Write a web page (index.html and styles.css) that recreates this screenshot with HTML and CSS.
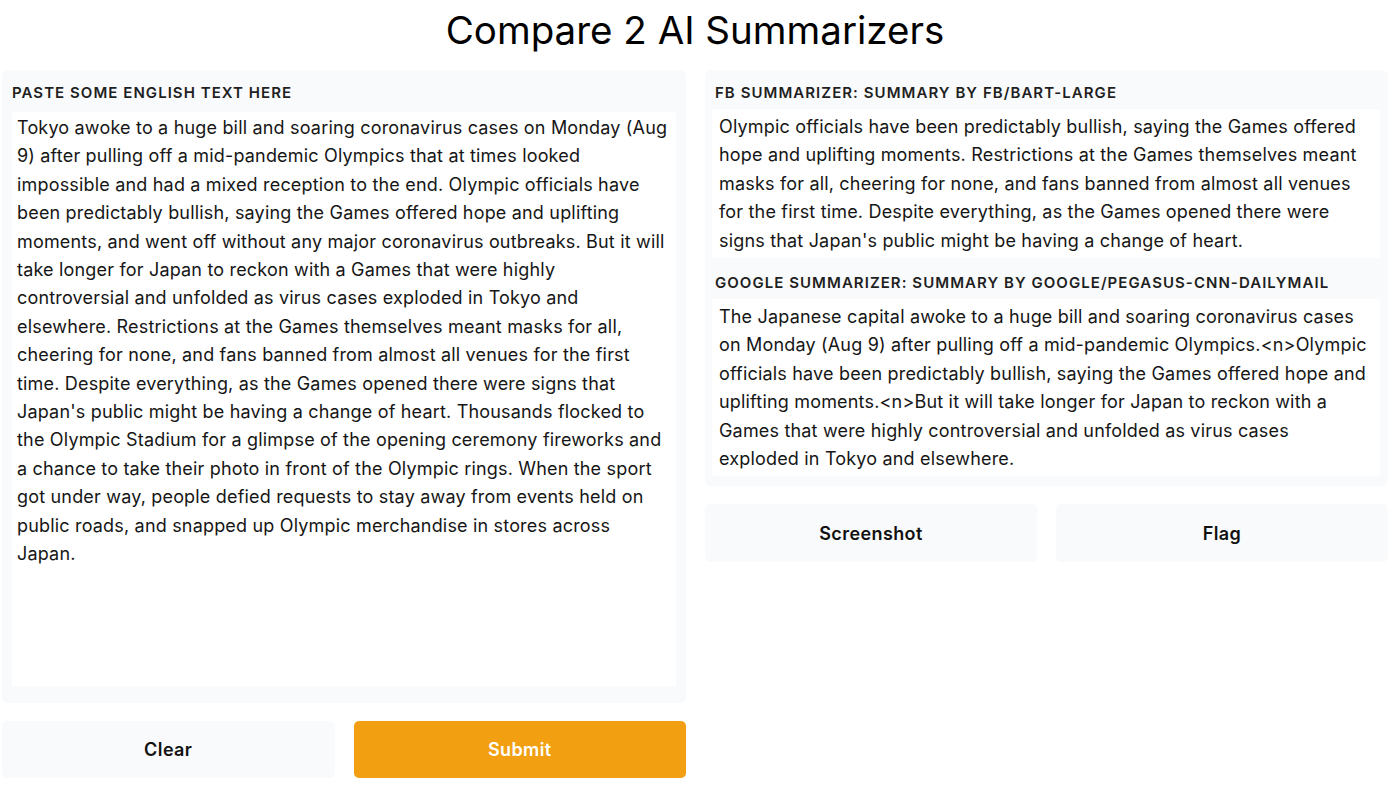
FILE: index.html
```html
<!DOCTYPE html>
<html lang="en">
<head>
<meta charset="utf-8">
<title>Compare 2 AI Summarizers</title>
<link rel="stylesheet" href="styles.css">
</head>
<body>
<h1 class="title">Compare 2 AI Summarizers</h1>
<div class="layout">
  <div class="col">
    <div class="panel panel-input">
      <label class="label" for="src">Paste some English text here</label>
      <textarea id="src" class="textbox">Tokyo awoke to a huge bill and soaring coronavirus cases on Monday (Aug 9) after pulling off a mid-pandemic Olympics that at times looked impossible and had a mixed reception to the end. Olympic officials have been predictably bullish, saying the Games offered hope and uplifting moments, and went off without any major coronavirus outbreaks. But it will take longer for Japan to reckon with a Games that were highly controversial and unfolded as virus cases exploded in Tokyo and elsewhere. Restrictions at the Games themselves meant masks for all, cheering for none, and fans banned from almost all venues for the first time. Despite everything, as the Games opened there were signs that Japan's public might be having a change of heart. Thousands flocked to the Olympic Stadium for a glimpse of the opening ceremony fireworks and a chance to take their photo in front of the Olympic rings. When the sport got under way, people defied requests to stay away from events held on public roads, and snapped up Olympic merchandise in stores across Japan.</textarea>
    </div>
    <div class="btn-row">
      <button class="btn">Clear</button>
      <button class="btn btn-primary">Submit</button>
    </div>
  </div>
  <div class="col">
    <div class="panel panel-output">
      <div class="label">FB Summarizer: Summary by fb/bart-large</div>
      <div class="outbox">Olympic officials have been predictably bullish, saying the Games offered hope and uplifting moments. Restrictions at the Games themselves meant masks for all, cheering for none, and fans banned from almost all venues for the first time. Despite everything, as the Games opened there were signs that Japan's public might be having a change of heart.</div>
      <div class="label label-second">Google Summarizer: Summary by google/pegasus-cnn-dailymail</div>
      <div class="outbox">The Japanese capital awoke to a huge bill and soaring coronavirus cases on Monday (Aug 9) after pulling off a mid-pandemic Olympics.&lt;n&gt;Olympic officials have been predictably bullish, saying the Games offered hope and uplifting moments.&lt;n&gt;But it will take longer for Japan to reckon with a Games that were highly controversial and unfolded as virus cases exploded in Tokyo and elsewhere.</div>
    </div>
    <div class="btn-row btn-row-right">
      <button class="btn">Screenshot</button>
      <button class="btn">Flag</button>
    </div>
  </div>
</div>
</body>
</html>
```

FILE: styles.css
```css
* { box-sizing: border-box; }
html, body { margin: 0; padding: 0; background: #ffffff; }
body {
  font-family: Inter, "Liberation Sans", Arial, sans-serif;
  color: #111111;
  width: 1400px;
  height: 796px;
  overflow: hidden;
}
.title {
  margin: 0;
  height: 60px;
  padding: 7px 12px 0 2px;
  font-size: 38.5px;
  font-weight: 400;
  text-align: center;
  line-height: 46px;
  color: #000;
}
.layout {
  display: grid;
  grid-template-columns: 684px 683px;
  column-gap: 19px;
  padding: 10px 12px 0 2px;
}
.col { display: flex; flex-direction: column; }
.panel {
  background: #f9fafb;
  border-radius: 6px;
  padding: 10px;
}
.panel-input {
  height: 633px;
  display: flex;
  flex-direction: column;
  padding-bottom: 17px;
}
.label {
  display: block;
  font-size: 15px;
  font-weight: 600;
  letter-spacing: 1.05px;
  text-transform: uppercase;
  color: #1f1f1f;
  height: 22px;
  line-height: 22px;
  margin-top: 2px;
  margin-bottom: 8px;
}
.textbox {
  flex: 1;
  width: 100%;
  border: none;
  outline: none;
  resize: none;
  background: #ffffff;
  border-radius: 2px;
  font-family: Inter, "Liberation Sans", Arial, sans-serif;
  font-size: 18px;
  letter-spacing: 0.18px;
  line-height: 28.4px;
  color: #161616;
  padding: 2px 4px 0 5px;
  margin: 0;
  overflow: hidden;
}
.panel-output { padding: 10px 8px 10px 7px; }
.panel-output .label { padding-left: 3px; margin-bottom: 5px; }
.outbox {
  background: #ffffff;
  border-radius: 2px;
  font-size: 18px;
  letter-spacing: 0.18px;
  line-height: 28.4px;
  color: #161616;
  padding: 4px 8px 3px 7px;
}
.label-second { margin-top: 14px; }
.btn-row {
  display: grid;
  grid-template-columns: 1fr 1fr;
  column-gap: 19px;
  margin-top: 18px;
}
.btn-row-right { margin-top: 18px; }
.btn {
  height: 57px;
  border: none;
  border-radius: 5px;
  background: #f9fafb;
  font-family: Inter, "Liberation Sans", Arial, sans-serif;
  font-size: 18px;
  font-weight: 600;
  letter-spacing: 0.4px;
  color: #111111;
  cursor: pointer;
}
.btn-row-right .btn { height: 58px; }
.btn-primary {
  background: #f29f12;
  color: #ffffff;
}
```
